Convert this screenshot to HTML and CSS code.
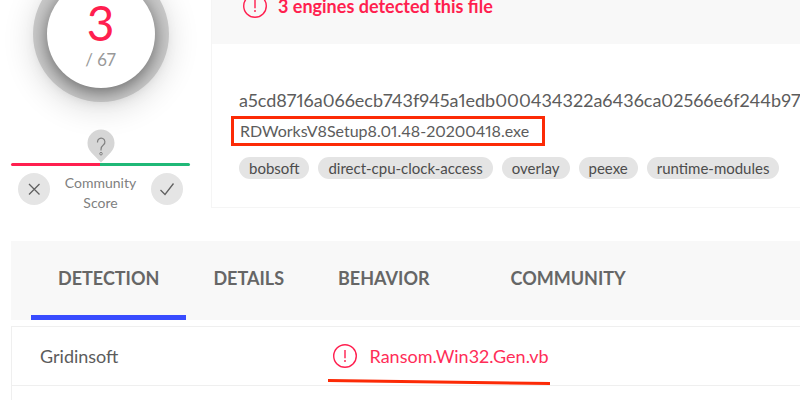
FILE: index.html
```html
<!DOCTYPE html>
<html lang="en">
<head>
  <meta charset="UTF-8">
  <title>File report</title>
  <link rel="stylesheet" href="styles.css">
</head>
<body>
  <main class="report">
    <div class="summary">
      <aside class="score">
        <div class="gauge">
          <div class="gauge-inner">
            <div class="positives">3</div>
            <div class="total">/ 67</div>
          </div>
        </div>
        <svg class="pin" width="28" height="34" viewBox="0 0 28 34" aria-hidden="true">
          <path d="M14 33.5 L4.3 23.4 A13.5 13.5 0 1 1 23.7 23.4 Z" fill="#d6d6d6"/>
          <path d="M10.5 13.5 V13 a3.7 3.7 0 1 1 6 2.8 C14.6 17.3 14 18.2 14 20.5 V21.5" fill="none" stroke="#808080" stroke-width="1.2"/>
          <circle cx="14" cy="24.7" r="1.3" fill="none" stroke="#808080"/>
        </svg>
        <div class="meter"></div>
        <div class="community">
          <button class="vote" type="button" aria-label="Malicious">
            <svg width="32" height="32" viewBox="0 0 32 32"><path d="M11 11 L21.5 21.5 M21.5 11 L11 21.5" fill="none" stroke="#606060" stroke-width="1.3"/></svg>
          </button>
          <div class="community-label">Community<br>Score</div>
          <button class="vote" type="button" aria-label="Harmless">
            <svg width="32" height="32" viewBox="0 0 32 32"><path d="M9.5 17 L14 21.5 L22.5 10.5" fill="none" stroke="#606060" stroke-width="1.3"/></svg>
          </button>
        </div>
      </aside>

      <section class="card">
        <div class="banner">
          <svg class="alert" width="24" height="24" viewBox="0 0 24 24" aria-hidden="true">
            <circle cx="12" cy="12" r="11.3"/>
            <path d="M12 6 V14.2 M12 16 V18"/>
          </svg>
          <span>3 engines detected this file</span>
        </div>
        <div class="file">
          <div class="hash">a5cd8716a066ecb743f945a1edb000434322a6436ca02566e6f244b97e</div>
          <div class="filename">RDWorksV8Setup8.01.48-20200418.exe</div>
          <div class="tags">
            <a class="tag" href="#">bobsoft</a>
            <a class="tag" href="#">direct-cpu-clock-access</a>
            <a class="tag" href="#">overlay</a>
            <a class="tag" href="#">peexe</a>
            <a class="tag" href="#">runtime-modules</a>
          </div>
        </div>
      </section>
    </div>

    <nav class="tabs">
      <button class="tab active" type="button">DETECTION</button>
      <button class="tab" type="button">DETAILS</button>
      <button class="tab" type="button">BEHAVIOR</button>
      <button class="tab tab-last" type="button">COMMUNITY</button>
    </nav>

    <table class="results">
      <tbody>
        <tr>
          <th class="engine" scope="row">Gridinsoft</th>
          <td>
            <div class="verdict">
              <svg class="alert" width="24" height="24" viewBox="0 0 24 24" aria-hidden="true">
                <circle cx="12" cy="12" r="11.3"/>
                <path d="M12 6 V14.2 M12 16 V18"/>
              </svg>
              <span>Ransom.Win32.Gen.vb</span>
              <svg class="underline" width="224" height="8" viewBox="0 0 224 8" aria-hidden="true">
                <path d="M0 2.5 L222 5.5"/>
              </svg>
            </div>
          </td>
        </tr>
        <tr>
          <th class="engine" scope="row"></th>
          <td></td>
        </tr>
      </tbody>
    </table>
  </main>
</body>
</html>
```

FILE: styles.css
```css
* {
  box-sizing: border-box;
}

body {
  margin: 0;
  background: #fff;
  color: #5c5c5c;
  font-family: Lato, sans-serif;
  font-size: 18px;
  line-height: 24px;
  font-variant-numeric: proportional-nums;
}

.report {
  height: 100vh;
  padding-left: 11px;
  overflow: hidden;
}

.summary {
  display: grid;
  grid-template-columns: 179px minmax(0, 1fr);
  gap: 21px;
}

.score {
  display: flex;
  flex-direction: column;
  align-items: center;
}

.gauge {
  width: 136px;
  height: 136px;
  margin-top: -34px;
  padding: 14px;
  border-radius: 50%;
  background: #cacaca;
  box-shadow: 0 6px 32px rgba(0, 0, 0, 0.14);
}

.gauge-inner {
  height: 108px;
  padding-top: 18px;
  border-radius: 50%;
  background: #fff;
  box-shadow: 0 4px 18px rgba(0, 0, 0, 0.5);
  text-align: center;
}

.positives {
  color: #ff1f4f;
  font-size: 48px;
  line-height: 50px;
}

.total {
  color: #999;
  font-size: 17px;
}

.pin {
  margin-top: 27px;
}

.meter {
  width: 100%;
  height: 3px;
  border-radius: 2px;
  background: linear-gradient(90deg, #ff1f4f 50%, #1fb877 50%);
}

.community {
  display: flex;
  align-items: flex-start;
  justify-content: space-between;
  width: 100%;
  padding: 7px 7px 0;
}

.vote {
  width: 32px;
  height: 32px;
  padding: 0;
  border: none;
  border-radius: 50%;
  background: #e5e5e5;
  cursor: pointer;
}

.vote svg {
  display: block;
}

.community-label {
  color: #808080;
  font-size: 14px;
  line-height: 20px;
  text-align: center;
}

.card {
  height: 208px;
  border: 1px solid #f5f5f5;
  border-width: 0 0 1px 1px;
}

.banner {
  display: flex;
  align-items: flex-start;
  gap: 11px;
  height: 44px;
  padding-left: 31px;
  background: #f8f8f8;
  color: #ff1f4f;
  font-weight: 700;
}

.banner .alert,
.banner span {
  margin-top: -6px;
}

.alert {
  flex: none;
  fill: none;
  stroke: #ff1f4f;
  stroke-width: 1.4;
}

.file {
  padding: 44px 0 0 27px;
}

.hash {
  white-space: nowrap;
}

.filename {
  width: fit-content;
  margin: 4px 0 0 -8px;
  padding: 0 13px 0 6px;
  border: 3px solid #fc2a06;
  font-size: 16px;
}

.tags {
  display: flex;
  gap: 9px;
  margin-top: 11px;
}

.tag {
  padding: 0 10px;
  border-radius: 11px;
  background: #e4e4e4;
  color: #4c4c4c;
  font-size: 15px;
  line-height: 22px;
  text-decoration: none;
  white-space: nowrap;
}

.tabs {
  display: flex;
  height: 79px;
  margin-top: 28px;
  padding-left: 20px;
  background: #f8f8f8;
}

.tab {
  padding: 0 27px;
  border: solid transparent;
  border-width: 0 0 5px;
  background: none;
  color: #666;
  font-family: inherit;
  font-size: 18px;
  font-weight: 700;
  cursor: pointer;
}

.tab.active {
  border-color: #384cff;
}

.tab-last {
  margin-left: 27px;
}

.results {
  width: 100%;
  margin-top: 6px;
  border-collapse: collapse;
  table-layout: fixed;
}

.results tr {
  height: 59px;
  border: 1px solid #efefef;
  border-right: none;
}

.results td {
  padding: 0;
}

.engine {
  width: 321px;
  padding: 0 28px;
  font-weight: 400;
  text-align: left;
}

.verdict {
  position: relative;
  display: flex;
  align-items: center;
  gap: 13px;
  color: #ff2d58;
}

.underline {
  position: absolute;
  top: 34px;
  left: -5px;
  fill: none;
  stroke: #fc2a06;
  stroke-width: 3;
}
```
